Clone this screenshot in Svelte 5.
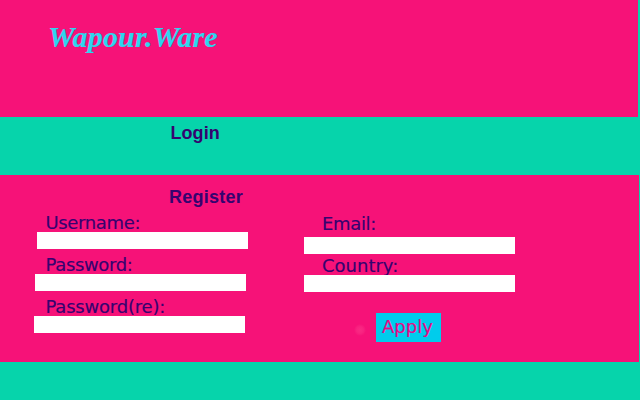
<script>
  const account = [
    { id: 'username', label: 'Username:', type: 'text' },
    { id: 'password', label: 'Password:', type: 'password' },
    { id: 'repeat', label: 'Password(re):', type: 'password' }
  ];
  const contact = [
    { id: 'email', label: 'Email:', type: 'email' },
    { id: 'country', label: 'Country:', type: 'text' }
  ];
</script>

<div class="page">
  <header><h1>Wapour.Ware</h1></header>
  <section class="login"><h2>Login</h2></section>
  <section class="register">
    <h2>Register</h2>
    <form>
      <div class="account">
        {#each account as field}
          <div class="field {field.id}">
            <label for={field.id}>{field.label}</label>
            <input id={field.id} type={field.type} />
          </div>
        {/each}
      </div>
      <div class="contact">
        {#each contact as field}
          <div class="field {field.id}">
            <label for={field.id}>{field.label}</label>
            <input id={field.id} type={field.type} />
          </div>
        {/each}
        <div class="actions">
          <i class="glow"></i>
          <button type="button">Apply</button>
        </div>
      </div>
    </form>
  </section>
</div>

<style>
  :global(body) { margin: 0; background: #06d4ab; }
  .page { width: 640px; height: 400px; overflow: hidden; background: #06d4ab; color: #35036f; }
  header { box-sizing: border-box; width: 638px; height: 117px; padding: 20px 0 0 48px; background: #f61278; }
  h1 { margin: 0; font: italic bold 30px/34px "Liberation Serif", serif; letter-spacing: 0.15px; color: #2fd5ee; -webkit-text-stroke: 0.15px currentColor; }
  h2 { margin: 0; font: bold 18px/20px "Liberation Sans", sans-serif; letter-spacing: 0.25px; }
  h2, label, button { white-space: nowrap; }
  .login { box-sizing: border-box; height: 58px; padding: 6px 0 0 170.5px; }
  .login h2 { letter-spacing: 0.05px; }
  .register { box-sizing: border-box; width: 639px; height: 187px; padding-top: 12px; background: #f61278; }
  .register h2 { padding-left: 169px; }
  form { display: flex; padding-top: 5px; }
  .account { width: 304px; }
  .field { display: flex; flex-direction: column; height: 42px; }
  label { height: 20px; padding-left: 45.5px; font: 18px/21px "DejaVu Sans", sans-serif; letter-spacing: -0.35px; -webkit-text-stroke: 0.15px currentColor; }
  input { box-sizing: border-box; width: 211px; height: 17px; margin: 0 0 0 37px; padding: 0 4px; border: 0; border-radius: 0; background: #fff; outline: none; }
  .password input { margin-left: 35px; }
  .repeat input { margin-left: 34px; }
  .repeat label { letter-spacing: -0.2px; }
  .contact label { padding-left: 18px; }
  .contact input { margin-left: 0; }
  .email label { height: 24px; padding-top: 1px; }
  .country label { height: 20px; padding-top: 1px; letter-spacing: 0; }
  .actions { display: flex; align-items: center; height: 29px; padding: 17px 0 0 50px; }
  .glow { width: 12px; height: 12px; margin: 4px 10px 0 0; border-radius: 50%; background: radial-gradient(circle, #f92a84 0, #f82380 40%, #f61278 72%); }
  button { width: 65px; height: 29px; padding: 0 0 2px 6px; border: 0; border-radius: 0; background: #00ccec; color: #e80785; text-align: left; font: 18px/27px "DejaVu Sans", sans-serif; -webkit-text-stroke: 0.15px currentColor; }
</style>
